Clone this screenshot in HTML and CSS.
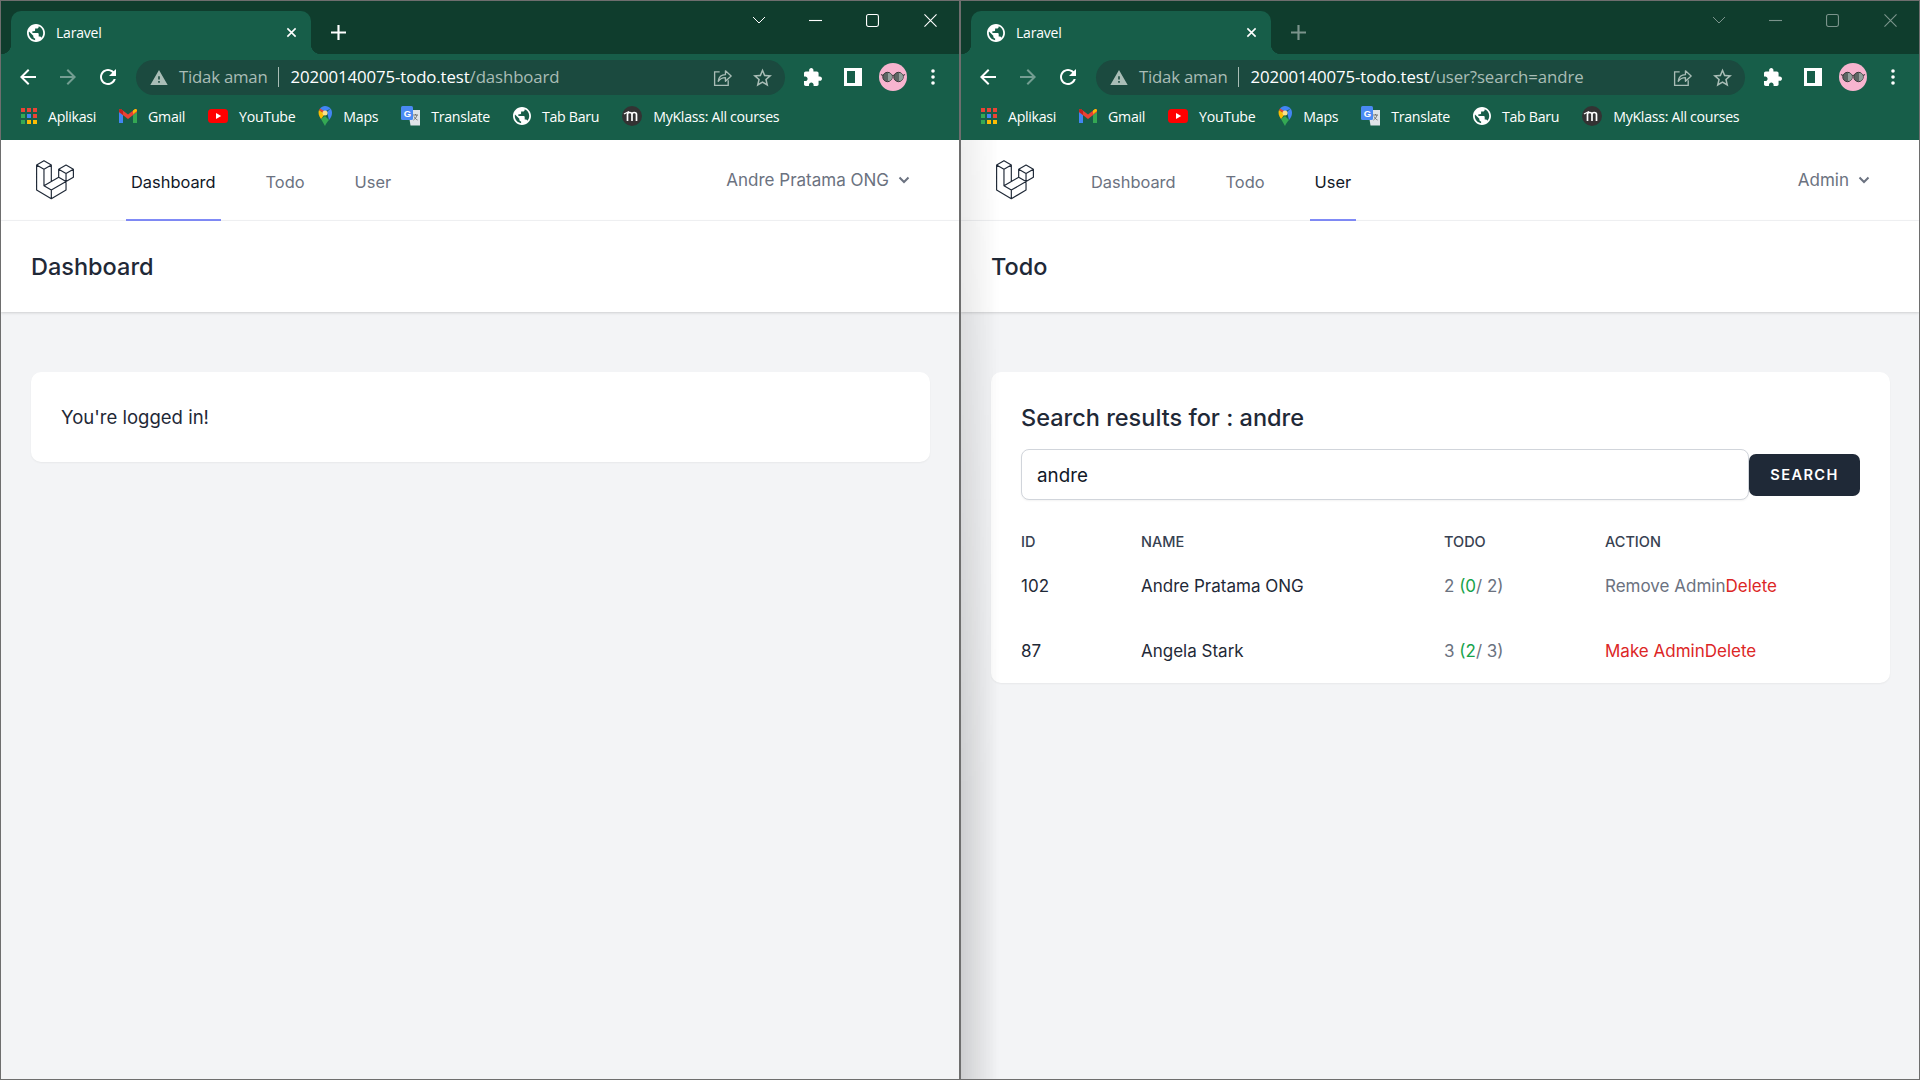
FILE: index.html
```html
<!DOCTYPE html>
<html lang="id">
<head>
    <meta charset="UTF-8">
    <title>Laravel</title>
    <link rel="stylesheet" href="styles.css">
</head>
<body>
    <svg class="sprite" xmlns="http://www.w3.org/2000/svg">
        <symbol id="i-globe" viewBox="2 2 20 20"><path fill="currentColor" d="M12 2C6.48 2 2 6.48 2 12s4.48 10 10 10 10-4.48 10-10S17.52 2 12 2zm-1 17.93c-3.95-.49-7-3.85-7-7.93 0-.62.08-1.21.21-1.79L9 15v1c0 1.1.9 2 2 2v1.93zm6.9-2.54c-.26-.81-1-1.39-1.9-1.39h-1v-3c0-.55-.45-1-1-1H8v-2h2c.55 0 1-.45 1-1V7h2c1.1 0 2-.9 2-2v-.41c2.93 1.19 5 4.06 5 7.41 0 2.08-.8 3.97-2.1 5.39z"/></symbol>
        <symbol id="i-close" viewBox="0 0 12 12"><path d="M1.5 1.5l9 9M10.5 1.5l-9 9" stroke="currentColor" stroke-width="1.7" fill="none"/></symbol>
        <symbol id="i-plus" viewBox="0 0 14 14"><path d="M7 0v14M0 7h14" stroke="currentColor" stroke-width="2" fill="none"/></symbol>
        <symbol id="i-chev-thin" viewBox="0 0 14 8"><path d="M1 1l6 6 6-6" stroke="currentColor" stroke-width="1" fill="none"/></symbol>
        <symbol id="i-min" viewBox="0 0 14 14"><path d="M0 7h14" stroke="currentColor" stroke-width="1.2" fill="none"/></symbol>
        <symbol id="i-max" viewBox="0 0 14 14"><rect x=".6" y=".6" width="12.8" height="12.8" rx="2" stroke="currentColor" stroke-width="1.2" fill="none"/></symbol>
        <symbol id="i-x" viewBox="0 0 14 14"><path d="M.5.5l13 13M13.5.5l-13 13" stroke="currentColor" stroke-width="1.2" fill="none"/></symbol>
        <symbol id="i-back" viewBox="0 0 24 24"><path fill="currentColor" d="M20 11H7.83l5.59-5.59L12 4l-8 8 8 8 1.41-1.41L7.83 13H20v-2z"/></symbol>
        <symbol id="i-forward" viewBox="0 0 24 24"><path fill="currentColor" d="M4 11h12.17l-5.59-5.59L12 4l8 8-8 8-1.41-1.41L16.17 13H4v-2z"/></symbol>
        <symbol id="i-reload" viewBox="0 0 24 24"><path fill="currentColor" d="M17.65 6.35C16.2 4.9 14.21 4 12 4c-4.42 0-7.99 3.58-7.99 8s3.57 8 7.99 8c3.73 0 6.84-2.55 7.73-6h-2.08c-.82 2.33-3.04 4-5.65 4-3.31 0-6-2.69-6-6s2.69-6 6-6c1.66 0 3.14.69 4.22 1.78L13 11h7V4l-2.35 2.35z"/></symbol>
        <symbol id="i-warn" viewBox="1 2 22 19"><path fill="currentColor" d="M1 21h22L12 2 1 21zm12-3h-2v-2h2v2zm0-4h-2v-4h2v4z"/></symbol>
        <symbol id="i-share" viewBox="0 0 20 20"><path d="M7 4H1.7v14.3H16V13" stroke="currentColor" stroke-width="1.4" fill="none"/><path d="M5.5 14c.6-4.600 3.600-7 7.600-7V3l6 5.500-6 5.500v-3.800c-3 0-5.500 1-7.600 3.800z" stroke="currentColor" stroke-width="1.4" fill="none" stroke-linejoin="round"/></symbol>
        <symbol id="i-star" viewBox="2 2 20 19"><path fill="currentColor" d="M22 9.240l-7.190-.62L12 2 9.190 8.630 2 9.240l5.460 4.730L5.820 21 12 17.270 18.180 21l-1.630-7.030L22 9.240zM12 15.400l-3.760 2.270 1-4.280-3.320-2.880 4.380-.38L12 6.100l1.710 4.040 4.380.38-3.320 2.880 1 4.280L12 15.400z"/></symbol>
        <symbol id="i-puzzle" viewBox="2 1 21 21"><path fill="currentColor" d="M20.500 11H19V7c0-1.100-.9-2-2-2h-4V3.500C13 2.120 11.880 1 10.500 1S8 2.120 8 3.500V5H4c-1.100 0-1.990.9-1.990 2v3.800H3.500c1.490 0 2.700 1.210 2.700 2.700s-1.210 2.700-2.700 2.700H2V20c0 1.100.9 2 2 2h3.800v-1.500c0-1.490 1.210-2.700 2.700-2.700 1.490 0 2.700 1.210 2.700 2.700V22H17c1.100 0 2-.9 2-2v-4h1.500c1.380 0 2.500-1.120 2.500-2.500S21.880 11 20.500 11z"/></symbol>
        <symbol id="i-side" viewBox="0 0 18 18"><path fill-rule="evenodd" fill="currentColor" d="M0 0h18v18H0zM3 3v12h8V3z"/></symbol>
        <symbol id="i-avatar" viewBox="0 0 28 28"><circle cx="14" cy="14" r="14" fill="#f7b4cf"/><path d="M2 11.500l3 1.500M26 11.500l-3 1.500M12 13c1.300-.9 2.700-.9 4 0" stroke="#444" stroke-width="1.100" fill="none"/><circle cx="8.500" cy="14" r="4.700" fill="#5d6664" stroke="#3a3a3a" stroke-width="1"/><circle cx="19.500" cy="14" r="4.700" fill="#5d6664" stroke="#3a3a3a" stroke-width="1"/><path d="M9 10a4 4 0 0 1 0 8zM20 10a4 4 0 0 1 0 8z" fill="#94a09d"/></symbol>
        <symbol id="i-dots" viewBox="0 0 4 16"><circle cx="2" cy="2" r="1.800" fill="currentColor"/><circle cx="2" cy="8" r="1.800" fill="currentColor"/><circle cx="2" cy="14" r="1.800" fill="currentColor"/></symbol>
        <symbol id="i-apps" viewBox="0 0 16 16"><path fill="#ea4335" d="M0 0h4v4H0zM6 0h4v4H6zM12 0h4v4h-4z"/><path fill="#34a853" d="M0 6h4v4H0z"/><path fill="#4285f4" d="M6 6h4v4H6z"/><path fill="#ea4335" d="M12 6h4v4h-4z"/><path fill="#34a853" d="M0 12h4v4H0z"/><path fill="#fbbc04" d="M6 12h4v4H6zM12 12h4v4h-4z"/></symbol>
        <symbol id="i-gmail" viewBox="0 0 18 14"><path fill="#4285f4" d="M0 2v12h4V5z"/><path fill="#34a853" d="M14 5v9h4V2z"/><path fill="#ea4335" d="M0 1.500C0 .2 1.500-.4 2.500.4L9 5.500 15.500.4c1-.8 2.500-.2 2.500 1.100V3l-9 7-9-7z"/><path fill="#fbbc04" d="M14 5l4-3V1.500C18 .2 16.500-.4 15.500.4L14 1.600z"/><path fill="#c5221f" d="M0 3l4 3V1.600L2.500.4C1.500-.4 0 .2 0 1.500z"/></symbol>
        <symbol id="i-yt" viewBox="0 0 20 14"><rect width="20" height="14" rx="3.500" fill="#f00"/><path d="M8 4l5.200 3L8 10z" fill="#fff"/></symbol>
        <symbol id="i-maps" viewBox="0 0 14 20"><path fill="#34a853" d="M3 13l4 7c1-2.500 2.500-4.500 4-6L7 10z"/><path fill="#fbbc04" d="M1 4C0 6.500.5 9.500 3 13l4-5z"/><path fill="#ea4335" d="M2 2.500L1 4l4.500 3L7 4.500z"/><path fill="#4285f4" d="M7 0C5 0 3.200.9 2 2.500l5 3 3-1.500 2.500-1.500C11.300.9 9.300 0 7 0z"/><path fill="#4285f4" d="M12.500 2.500L9 6l2 8c2-2.500 3-4.500 3-7 0-1.700-.5-3.200-1.500-4.500z"/><circle cx="7" cy="7" r="2.500" fill="#fbe08a"/></symbol>
        <symbol id="i-translate" viewBox="0 0 19 20"><path fill="#dfe3e8" d="M7 4h12v15.500H9.500z"/><rect width="12" height="14" rx="1.500" fill="#4a8af4"/><text x="2.800" y="10.500" font-size="9.500" font-weight="700" fill="#fff" font-family="Liberation Sans, sans-serif">G</text><path d="M12 9h5M14.500 8v1M16 9c-.6 2.500-2 4-3.500 5M13 10.500c.8 1.500 2 3 3.500 3.500" stroke="#666" stroke-width=".9" fill="none"/></symbol>
        <symbol id="i-moodle" viewBox="0 0 20 20"><circle cx="10" cy="10" r="10" fill="#333"/><path d="M5.500 15V8.500c0-1.300 1-2 2.200-2s2.300.7 2.300 2V15M10 8.500c0-1.300 1-2 2.200-2s2.300.7 2.300 2V15" stroke="#fff" stroke-width="1.700" fill="none"/><path d="M2 8l5-2.500" stroke="#fff" stroke-width="1.300"/></symbol>
        <symbol id="i-logo" viewBox="0 0 62 65"><path d="M1 8L13 1l12 7-12 7zM1 8v41l24 14 24-14V36M13 15v27l12 7 24-14M25 8v27l-12 7M25 49v14M25 35l12-7M37 15l12-7 12 7-12 7zM37 15v13l12 7 12-7V15M49 22v13" stroke="#1f2937" stroke-width="1.900" fill="none" stroke-linejoin="round"/></symbol>
        <symbol id="i-chev" viewBox="0 0 12 8"><path d="M1.500 1.500L6 6l4.500-4.500" stroke="currentColor" stroke-width="2" fill="none"/></symbol>
    </svg>

    <div class="desktop">
        <section class="window">
            <div class="tabbar">
                <div class="tab">
                    <svg class="tab-icon"><use href="#i-globe"/></svg>
                    <span class="tab-title">Laravel</span>
                    <svg class="tab-close"><use href="#i-close"/></svg>
                </div>
                <svg class="new-tab"><use href="#i-plus"/></svg>
                <div class="controls">
                    <svg class="ctl-chev"><use href="#i-chev-thin"/></svg>
                    <span class="ctl"><svg><use href="#i-min"/></svg></span>
                    <span class="ctl"><svg><use href="#i-max"/></svg></span>
                    <span class="ctl"><svg><use href="#i-x"/></svg></span>
                </div>
            </div>
            <div class="toolbar">
                <span class="tool"><svg class="ic22"><use href="#i-back"/></svg></span>
                <span class="tool dim"><svg class="ic22"><use href="#i-forward"/></svg></span>
                <span class="tool"><svg class="ic22"><use href="#i-reload"/></svg></span>
                <div class="omnibox">
                    <svg class="warn"><use href="#i-warn"/></svg>
                    <span class="insecure">Tidak aman</span>
                    <span class="url"><b>20200140075-todo.test</b>/dashboard</span>
                    <span class="omni-tool share-tool"><svg class="ic20"><use href="#i-share"/></svg></span>
                    <span class="omni-tool"><svg class="ic20"><use href="#i-star"/></svg></span>
                </div>
                <span class="tool tool-first"><svg class="ic18"><use href="#i-puzzle"/></svg></span>
                <span class="tool"><svg class="ic18"><use href="#i-side"/></svg></span>
                <span class="tool"><svg class="ic28"><use href="#i-avatar"/></svg></span>
                <span class="tool"><svg class="dots"><use href="#i-dots"/></svg></span>
            </div>
            <div class="bookmarks">
                <a class="bookmark"><svg class="bm-apps"><use href="#i-apps"/></svg>Aplikasi</a>
                <a class="bookmark"><svg class="bm-gmail"><use href="#i-gmail"/></svg>Gmail</a>
                <a class="bookmark"><svg class="bm-yt"><use href="#i-yt"/></svg>YouTube</a>
                <a class="bookmark"><svg class="bm-maps"><use href="#i-maps"/></svg>Maps</a>
                <a class="bookmark"><svg class="bm-tr"><use href="#i-translate"/></svg>Translate</a>
                <a class="bookmark"><svg class="bm-globe"><use href="#i-globe"/></svg>Tab Baru</a>
                <a class="bookmark"><svg class="bm-moodle"><use href="#i-moodle"/></svg>MyKlass: All courses</a>
            </div>
            <div class="page">
                <nav class="nav">
                    <svg class="logo"><use href="#i-logo"/></svg>
                    <div class="nav-links">
                        <a class="nav-link active">Dashboard</a>
                        <a class="nav-link">Todo</a>
                        <a class="nav-link">User</a>
                    </div>
                    <div class="user-menu">Andre Pratama ONG <svg class="chev"><use href="#i-chev"/></svg></div>
                </nav>
                <header class="page-header"><h2>Dashboard</h2></header>
                <main class="content">
                    <div class="card logged">You're logged in!</div>
                </main>
            </div>
        </section>

        <section class="window inactive">
            <div class="tabbar">
                <div class="tab">
                    <svg class="tab-icon"><use href="#i-globe"/></svg>
                    <span class="tab-title">Laravel</span>
                    <svg class="tab-close"><use href="#i-close"/></svg>
                </div>
                <svg class="new-tab"><use href="#i-plus"/></svg>
                <div class="controls">
                    <svg class="ctl-chev"><use href="#i-chev-thin"/></svg>
                    <span class="ctl"><svg><use href="#i-min"/></svg></span>
                    <span class="ctl"><svg><use href="#i-max"/></svg></span>
                    <span class="ctl"><svg><use href="#i-x"/></svg></span>
                </div>
            </div>
            <div class="toolbar">
                <span class="tool"><svg class="ic22"><use href="#i-back"/></svg></span>
                <span class="tool dim"><svg class="ic22"><use href="#i-forward"/></svg></span>
                <span class="tool"><svg class="ic22"><use href="#i-reload"/></svg></span>
                <div class="omnibox">
                    <svg class="warn"><use href="#i-warn"/></svg>
                    <span class="insecure">Tidak aman</span>
                    <span class="url"><b>20200140075-todo.test</b>/user?search=andre</span>
                    <span class="omni-tool share-tool"><svg class="ic20"><use href="#i-share"/></svg></span>
                    <span class="omni-tool"><svg class="ic20"><use href="#i-star"/></svg></span>
                </div>
                <span class="tool tool-first"><svg class="ic18"><use href="#i-puzzle"/></svg></span>
                <span class="tool"><svg class="ic18"><use href="#i-side"/></svg></span>
                <span class="tool"><svg class="ic28"><use href="#i-avatar"/></svg></span>
                <span class="tool"><svg class="dots"><use href="#i-dots"/></svg></span>
            </div>
            <div class="bookmarks">
                <a class="bookmark"><svg class="bm-apps"><use href="#i-apps"/></svg>Aplikasi</a>
                <a class="bookmark"><svg class="bm-gmail"><use href="#i-gmail"/></svg>Gmail</a>
                <a class="bookmark"><svg class="bm-yt"><use href="#i-yt"/></svg>YouTube</a>
                <a class="bookmark"><svg class="bm-maps"><use href="#i-maps"/></svg>Maps</a>
                <a class="bookmark"><svg class="bm-tr"><use href="#i-translate"/></svg>Translate</a>
                <a class="bookmark"><svg class="bm-globe"><use href="#i-globe"/></svg>Tab Baru</a>
                <a class="bookmark"><svg class="bm-moodle"><use href="#i-moodle"/></svg>MyKlass: All courses</a>
            </div>
            <div class="page">
                <nav class="nav">
                    <svg class="logo"><use href="#i-logo"/></svg>
                    <div class="nav-links">
                        <a class="nav-link">Dashboard</a>
                        <a class="nav-link">Todo</a>
                        <a class="nav-link active">User</a>
                    </div>
                    <div class="user-menu">Admin <svg class="chev"><use href="#i-chev"/></svg></div>
                </nav>
                <header class="page-header"><h2>Todo</h2></header>
                <main class="content">
                    <div class="card results">
                        <h3>Search results for : andre</h3>
                        <form class="search">
                            <input class="search-input" type="text" value="andre">
                            <button class="search-btn" type="button">SEARCH</button>
                        </form>
                        <table class="users">
                            <thead>
                                <tr><th class="col-id">ID</th><th class="col-name">NAME</th><th class="col-todo">TODO</th><th>ACTION</th></tr>
                            </thead>
                            <tbody>
                                <tr>
                                    <td>102</td>
                                    <td>Andre Pratama ONG</td>
                                    <td class="muted">2 <span class="done">(0</span>/ 2)</td>
                                    <td class="muted">Remove Admin<span class="danger">Delete</span></td>
                                </tr>
                                <tr>
                                    <td>87</td>
                                    <td>Angela Stark</td>
                                    <td class="muted">3 <span class="done">(2</span>/ 3)</td>
                                    <td><span class="danger">Make Admin</span><span class="danger">Delete</span></td>
                                </tr>
                            </tbody>
                        </table>
                    </div>
                </main>
                <div class="edge-shadow"></div>
            </div>
        </section>
    </div>
</body>
</html>
```

FILE: styles.css
```css
* {
    box-sizing: border-box;
}
html, body {
    margin: 0;
    height: 100%;
    overflow: hidden;
}
body {
    font-family: Inter, "Open Sans", sans-serif;
    color: #111827;
}
svg {
    display: block;
    flex: none;
}
.sprite {
    display: none;
}
.desktop {
    display: grid;
    grid-template-columns: 960px 960px;
    height: 1080px;
}

/* browser frame */
.window {
    display: flex;
    flex-direction: column;
    height: 1080px;
    border: 1px solid #6e6e6e;
    overflow: hidden;
}
.tabbar {
    display: flex;
    align-items: flex-start;
    height: 53px;
    padding-left: 10px;
    background-color: #0f3d2d;
    color: white;
}
.tab {
    position: relative;
    display: flex;
    align-items: center;
    width: 300px;
    height: 43px;
    margin-top: 10px;
    padding: 0 15px 0 16px;
    border-radius: 10px 10px 0 0;
    background-color: #175e49;
}
.tab::before, .tab::after {
    content: "";
    position: absolute;
    bottom: 0;
    width: 10px;
    height: 10px;
}
.tab::before {
    left: -10px;
    background: radial-gradient(circle at 0 0, transparent 10px, #175e49 10.5px);
}
.tab::after {
    right: -10px;
    background: radial-gradient(circle at 100% 0, transparent 10px, #175e49 10.5px);
}
.tab-icon {
    width: 18px;
    height: 18px;
}
.tab-title {
    margin-left: 11px;
    font-family: "Open Sans", sans-serif;
    font-size: 14px;
    letter-spacing: -0.2px;
}
.tab-close {
    width: 11px;
    height: 11px;
    margin-left: auto;
    margin-right: -1px;
}
.new-tab {
    width: 15px;
    height: 15px;
    margin: 24px 0 0 20px;
}
.controls {
    display: flex;
    align-items: center;
    height: 38px;
    margin-left: auto;
}
.ctl-chev {
    width: 14px;
    height: 8px;
    margin-right: 21px;
}
.ctl {
    display: flex;
    align-items: center;
    justify-content: center;
    width: 57.5px;
    height: 38px;
}
.ctl svg {
    width: 13px;
    height: 13px;
}
.inactive .new-tab, .inactive .controls {
    opacity: 0.45;
}
.toolbar {
    display: flex;
    align-items: center;
    height: 46px;
    padding-left: 7px;
    background-color: #175e49;
    color: white;
}
.tool {
    display: flex;
    align-items: center;
    justify-content: center;
    width: 40px;
    height: 35px;
}
.tool-first {
    margin-left: 8px;
}
.dim {
    opacity: 0.4;
}
.ic22 {
    width: 24px;
    height: 24px;
}
.ic20 {
    width: 19px;
    height: 19px;
}
.ic18 {
    width: 18px;
    height: 18px;
}
.ic28 {
    width: 28px;
    height: 28px;
}
.dots {
    width: 4px;
    height: 16px;
}
.omnibox {
    display: flex;
    align-items: center;
    width: 649px;
    height: 35px;
    margin-left: 8px;
    padding: 0 3px 0 14px;
    border-radius: 18px;
    background-color: #1b4a3f;
    color: #a9bdb6;
    font-family: "Open Sans", sans-serif;
    font-size: 16.8px;
    letter-spacing: -0.22px;
}
.warn {
    width: 18px;
    height: 15px;
}
.insecure {
    margin-left: 11px;
    padding-right: 10px;
    border-right: 1px solid #a9bdb6;
    line-height: 20px;
}
.url {
    margin-left: 12px;
    letter-spacing: -0.1px;
    line-height: 20px;
}
.url b {
    font-weight: 400;
    color: white;
}
.omni-tool {
    display: flex;
    justify-content: center;
    width: 40px;
}
.share-tool {
    margin-left: auto;
}
.bookmarks {
    display: flex;
    align-items: center;
    gap: 23px;
    height: 40px;
    padding: 0 0 8px 20px;
    background-color: #175e49;
    color: white;
    font-family: "Open Sans", sans-serif;
    font-size: 14.2px;
    letter-spacing: -0.3px;
}
.bookmark {
    display: flex;
    align-items: center;
    gap: 11px;
}
.bm-apps {
    width: 16px;
    height: 16px;
}
.bm-gmail {
    width: 18px;
    height: 14px;
}
.bm-yt {
    width: 20px;
    height: 14px;
}
.bm-maps {
    width: 14px;
    height: 20px;
}
.bm-tr {
    width: 19px;
    height: 20px;
}
.bm-globe {
    width: 18px;
    height: 18px;
}
.bm-moodle {
    width: 20px;
    height: 20px;
}

/* page */
.page {
    position: relative;
    flex: 1;
    display: flex;
    flex-direction: column;
    background-color: #f3f4f6;
}
.nav {
    display: flex;
    align-items: center;
    height: 81px;
    padding: 0 49px 0 35px;
    background-color: white;
    box-shadow: inset 0 -1px #f3f4f6;
}
.logo {
    width: 38px;
    height: 40px;
    margin-top: -1px;
}
.nav-links {
    display: flex;
    gap: 40px;
    height: 81px;
    margin-left: 52px;
}
.nav-link {
    display: flex;
    align-items: center;
    padding: 5px 5px 0;
    border-bottom: 2px solid transparent;
    color: #6b7280;
    font-size: 16.4px;
    font-weight: 400;
}
.nav-link.active {
    border-bottom-color: #818cf8;
    color: #111827;
}
.user-menu {
    display: flex;
    align-items: center;
    gap: 9px;
    margin: -2px 0 0 auto;
    color: #6b7280;
    font-size: 17px;
}
.chev {
    width: 12px;
    height: 8px;
}
.page-header {
    height: 91px;
    padding: 0 30px;
    background-color: white;
    box-shadow: 0 1px 3px rgba(0, 0, 0, 0.1), 0 1px 2px rgba(0, 0, 0, 0.06);
}
.page-header h2 {
    margin: 0;
    color: #1f2937;
    font-size: 23.5px;
    font-weight: 500;
    line-height: 91px;
}
.content {
    padding: 60px 29px 0 30px;
}
.card {
    padding: 30px;
    border-radius: 10px;
    background-color: white;
    box-shadow: 0 1px 2px rgba(0, 0, 0, 0.05);
}
.logged {
    color: #1f2937;
    font-size: 18.55px;
    line-height: 30px;
}
.results {
    height: 311px;
}
.results h3 {
    margin: 1px 0 0;
    color: #1f2937;
    font-size: 23.5px;
    font-weight: 500;
    line-height: 30px;
}
.search {
    display: flex;
    align-items: center;
    margin-top: 16px;
}
.search-input {
    width: 728px;
    height: 51px;
    padding: 2px 15px 0;
    border: 1px solid #d1d5db;
    border-radius: 8px;
    color: #111827;
    font-family: inherit;
    font-size: 18.8px;
    box-shadow: 0 1px 2px rgba(0, 0, 0, 0.05);
}
.search-btn {
    width: 111px;
    height: 42px;
    border: none;
    border-radius: 7px;
    background-color: #1f2937;
    color: white;
    font-family: inherit;
    font-size: 14.6px;
    font-weight: 600;
    letter-spacing: 1.4px;
}
.users {
    width: 779px;
    margin-top: 29px;
    border-collapse: collapse;
    table-layout: fixed;
    font-size: 17px;
}
.users th {
    height: 24px;
    padding: 0;
    color: #374151;
    font-size: 14.5px;
    font-weight: 500;
    text-align: left;
}
.users td {
    height: 65px;
    padding: 0;
    color: #1f2937;
}
.col-id {
    width: 120px;
}
.col-name {
    width: 303px;
}
.col-todo {
    width: 161px;
}
.users td.muted {
    color: #6b7280;
}
.done {
    color: #16a34a;
}
.danger {
    color: #dc2626;
}

/* shadow of the other window falling on this one */
.edge-shadow {
    position: absolute;
    top: 0;
    bottom: 0;
    left: 0;
    width: 38px;
    background: linear-gradient(to right, rgba(0, 0, 0, 0.15), rgba(0, 0, 0, 0));
    -webkit-mask-image: linear-gradient(to bottom, rgba(0, 0, 0, 0.45), #000 70%);
    mask-image: linear-gradient(to bottom, rgba(0, 0, 0, 0.45), #000 70%);
    pointer-events: none;
}
```
